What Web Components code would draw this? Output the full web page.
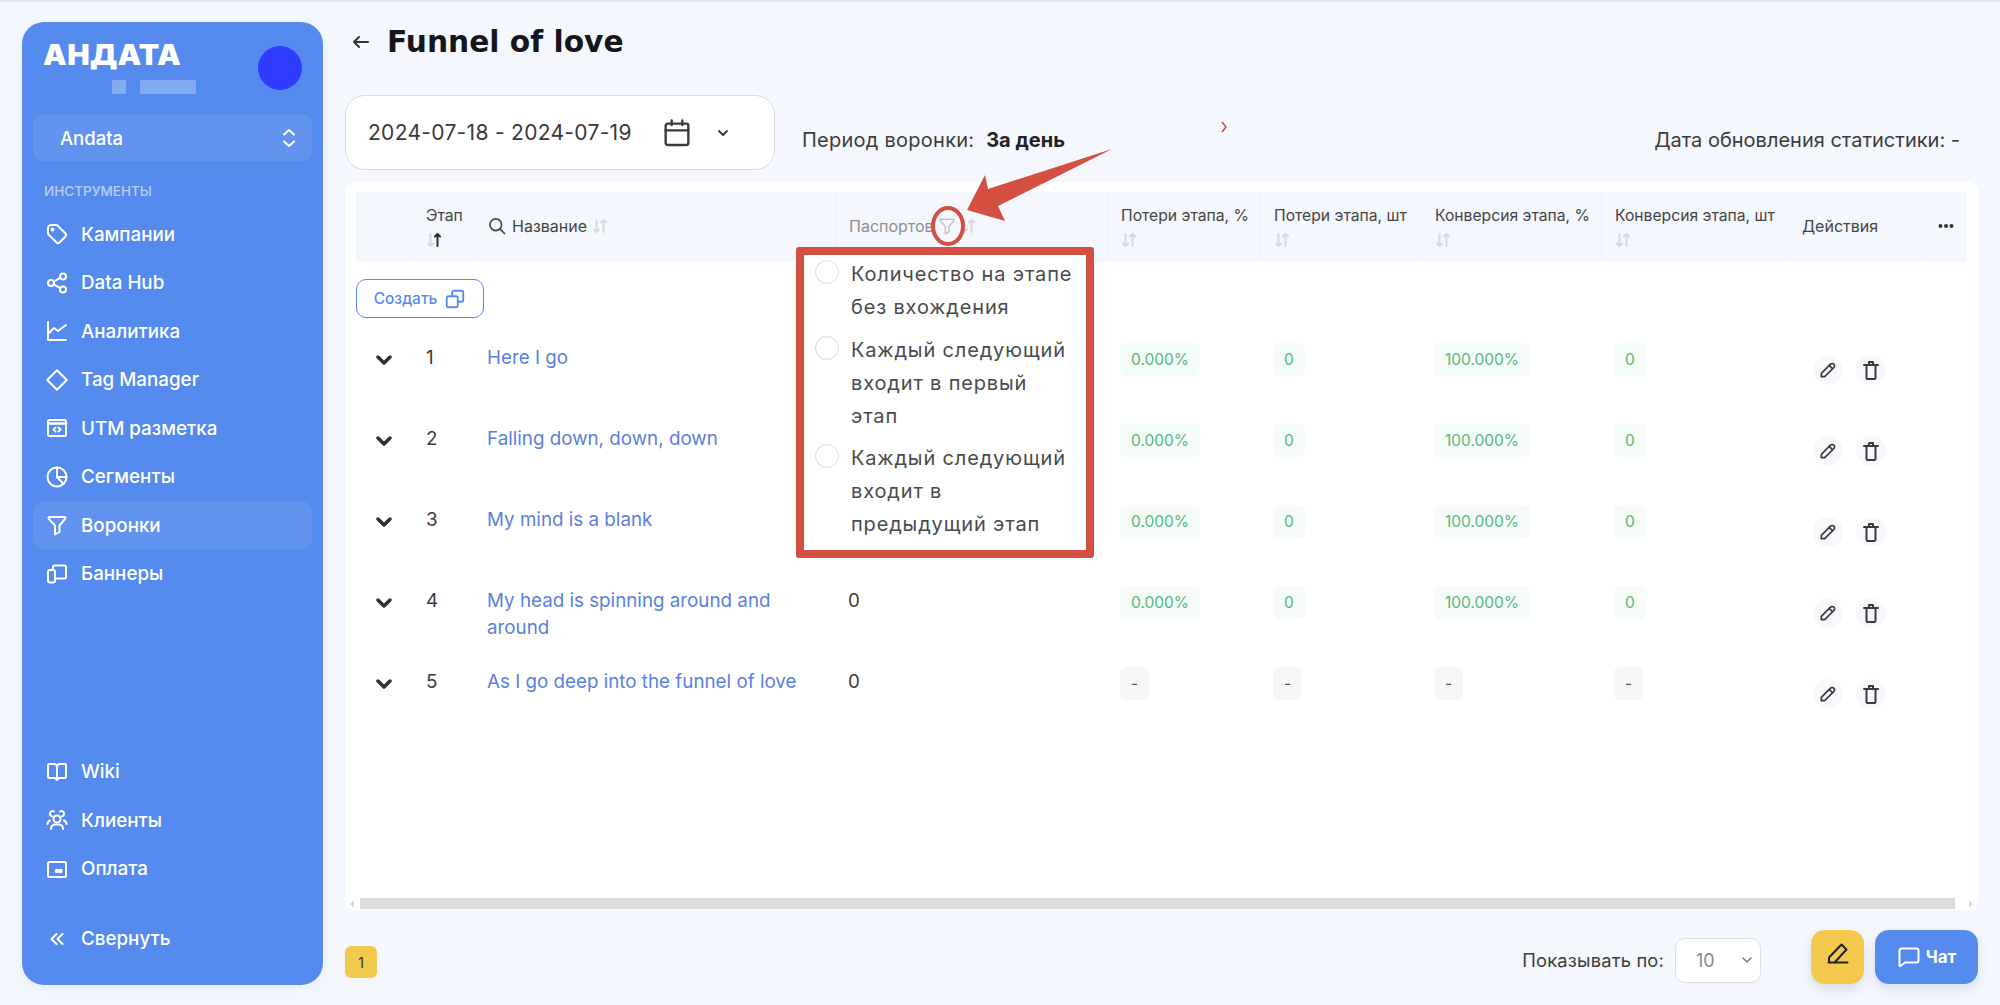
<!DOCTYPE html>
<html lang="ru">
<head>
<meta charset="utf-8">
<title>Funnel of love</title>
<style>
  html, body { margin: 0; height: 100%; }
  body { background: #f4f7fd; border-top: 2px solid #e3e6ec; box-sizing: border-box; font-family: Inter, "Noto Sans", sans-serif; overflow: hidden; }
  #app { display: flex; height: 1003px; }
</style>
</head>
<body>
<div id="app">
  <app-sidebar>
    <nav-item icon="tag">Кампании</nav-item>
    <nav-item icon="share">Data Hub</nav-item>
    <nav-item icon="chart">Аналитика</nav-item>
    <nav-item icon="diamond">Tag Manager</nav-item>
    <nav-item icon="code">UTM разметка</nav-item>
    <nav-item icon="pie">Сегменты</nav-item>
    <nav-item icon="funnel" active>Воронки</nav-item>
    <nav-item icon="banner">Баннеры</nav-item>
    <nav-item slot="bottom" icon="book">Wiki</nav-item>
    <nav-item slot="bottom" icon="users">Клиенты</nav-item>
    <nav-item slot="bottom" icon="pay">Оплата</nav-item>
    <nav-item slot="collapse" icon="collapse">Свернуть</nav-item>
  </app-sidebar>
  <funnel-page>
    <funnel-row stage="1" name="Here I go" loss="0.000%" lossn="0" conv="100.000%" convn="0"></funnel-row>
    <funnel-row stage="2" name="Falling down, down, down" loss="0.000%" lossn="0" conv="100.000%" convn="0"></funnel-row>
    <funnel-row stage="3" name="My mind is a blank" loss="0.000%" lossn="0" conv="100.000%" convn="0"></funnel-row>
    <funnel-row stage="4" name="My head is spinning around and around" pass="0" loss="0.000%" lossn="0" conv="100.000%" convn="0"></funnel-row>
    <funnel-row stage="5" name="As I go deep into the funnel of love" pass="0" loss="-" lossn="-" conv="-" convn="-"></funnel-row>
  </funnel-page>
</div>
<funnel-callout></funnel-callout>

<script>
const ICONS = {
  tag: '<circle cx="7.5" cy="7.5" r="1"/><path d="M3 6v5.172a2 2 0 0 0 .586 1.414l7.71 7.71a2.41 2.41 0 0 0 3.408 0l5.592-5.592a2.41 2.41 0 0 0 0-3.408l-7.71-7.71a2 2 0 0 0-1.414-.586H6a3 3 0 0 0-3 3"/>',
  share: '<circle cx="6" cy="12" r="3"/><circle cx="18" cy="5.5" r="3"/><circle cx="18" cy="18.5" r="3"/><path d="M8.7 10.6l6.6-3.7M8.7 13.4l6.6 3.7"/>',
  chart: '<path d="M3 3v18h18"/><path d="M4 14l5-5 4 3 8-6"/>',
  diamond: '<path d="M12 2.2L21.8 12 12 21.8 2.2 12z"/>',
  code: '<rect x="3" y="4" width="18" height="16" rx="1.5"/><path d="M3 7.5h18" stroke-width="2.5"/><path d="M10.5 11.5l-2 2 2 2M13.5 11.5l2 2-2 2"/>',
  pie: '<circle cx="12" cy="12" r="9.500"/><path d="M12 2.500V12h9.500"/><path d="M12 12l6.500 7"/>',
  funnel: '<path d="M4.5 4h15a1 1 0 0 1 .8 1.6L14.5 12.500V19l-4.500 2.500v-9L3.700 5.600A1 1 0 0 1 4.500 4z"/>',
  banner: '<path d="M8 8V5a1.500 1.500 0 0 1 1.500-1.500H19.500A1.500 1.500 0 0 1 21 5v10a1.500 1.500 0 0 1-1.500 1.500H10"/><rect x="3" y="8" width="7" height="12.500" rx="2"/>',
  book: '<path d="M12 7a3 3 0 0 0-3-3H4a1 1 0 0 0-1 1v12a1 1 0 0 0 1 1h6l2 2 2-2h6a1 1 0 0 0 1-1V5a1 1 0 0 0-1-1h-5a3 3 0 0 0-3 3v11"/>',
  users: '<circle cx="12" cy="11" r="3.500"/><path d="M6 21v-.5a4 4 0 0 1 4-4h4a4 4 0 0 1 4 4v.500"/><path d="M7.500 8.500a2.700 2.700 0 1 1 1.500-5"/><path d="M16.500 8.500a2.700 2.700 0 1 0-1.500-5"/><path d="M2.500 16a4 4 0 0 1 2.500-3.500M21.500 16a4 4 0 0 0-2.500-3.500"/>',
  pay: '<rect x="3" y="5" width="18" height="15" rx="1.500"/><circle cx="12" cy="14" r="1.200" fill="currentColor"/><circle cx="15.500" cy="14" r="1.200" fill="currentColor"/>',
  collapse: '<path d="M11.500 7l-5 5 5 5M17.500 7l-5 5 5 5"/>'
};

function svgIcon(body, size, width) {
  return `<svg width="${size}" height="${size}" viewBox="0 0 24 24" fill="none" stroke="currentColor" stroke-width="${width}" stroke-linecap="round" stroke-linejoin="round">${body}</svg>`;
}

function sortIcon(active) {
  return `<svg width="16" height="18" viewBox="0 0 16 18" fill="none" stroke-width="2" stroke-linecap="round" stroke-linejoin="round">
    <path d="M4.500 3v12M2 12.500L4.500 15 7 12.500" stroke="#d6d8dd"/>
    <path d="M11.500 15V3M9 5.500L11.500 3 14 5.500" stroke="${active ? '#2b2b2b' : '#d6d8dd'}"/>
  </svg>`;
}

class AppSidebar extends HTMLElement {
  constructor() {
    super();
    this.attachShadow({ mode: 'open' }).innerHTML = `
      <style>
        :host { display: flex; flex-direction: column; width: 301px; height: 963px; margin: 20px 22px 0 22px; padding: 0 11px; box-sizing: border-box; background: #558bee; border-radius: 22px; color: #fff; flex: none; box-shadow: 0 4px 14px rgba(85,139,238,.08); }
        .brand { height: 92px; position: relative; display: flex; justify-content: space-between; }
        .logo-wrap { padding: 17px 0 0 10px; }
        .logo { font: 900 28px/32px Inter, sans-serif; letter-spacing: .3px; transform: scaleX(1.07); transform-origin: left; }
        .blur { display: flex; gap: 14px; margin: 9px 0 0 69px; }
        .blur i { display: block; height: 14px; background: rgba(255,255,255,.28); }
        .blur i:first-child { width: 14px; }
        .blur i:last-child { width: 56px; }
        .avatar { width: 44px; height: 44px; border-radius: 50%; background: #2e3cff; margin: 24px 10px 0 0; }
        .select { height: 47px; border-radius: 10px; background: rgba(255,255,255,.08); display: flex; align-items: center; justify-content: space-between; padding: 0 15px 0 27px; font-size: 18.500px; font-weight: 500; }
        .select svg { display: block; }
        .label { height: 49px; line-height: 60px; padding-left: 11px; box-sizing: border-box; font-size: 13.500px; font-weight: 500; color: rgba(255,255,255,.6); }
        .bottom { margin-top: auto; }
        .collapse { margin: 21.500px 0 22px; }
      </style>
      <div class="brand">
        <div class="logo-wrap">
          <div class="logo">АНДАТА</div>
          <div class="blur"><i></i><i></i></div>
        </div>
        <div class="avatar"></div>
      </div>
      <div class="select">
        <span>Andata</span>
        <svg width="16" height="24" viewBox="0 0 16 24" fill="none" stroke="currentColor" stroke-width="2" stroke-linecap="round" stroke-linejoin="round"><path d="M3 8.500L8 4l5 4.500M3 15.500L8 20l5-4.500"/></svg>
      </div>
      <div class="label">ИНСТРУМЕНТЫ</div>
      <slot></slot>
      <div class="bottom"><slot name="bottom"></slot></div>
      <div class="collapse"><slot name="collapse"></slot></div>
    `;
  }
}
customElements.define('app-sidebar', AppSidebar);

class NavItem extends HTMLElement {
  connectedCallback() {
    if (this.shadowRoot) return;
    const icon = ICONS[this.getAttribute('icon')];
    this.attachShadow({ mode: 'open' }).innerHTML = `
      <style>
        :host { display: flex; align-items: center; gap: 12px; height: 48.500px; padding-left: 12px; box-sizing: border-box; border-radius: 12px; font-size: 18.800px; font-weight: 500; color: #fff; }
        :host([active]) { background: rgba(255,255,255,.08); }
        svg { display: block; flex: none; }
      </style>
      ${svgIcon(icon, 24, 2)}
      <slot></slot>
    `;
  }
}
customElements.define('nav-item', NavItem);

class FunnelPage extends HTMLElement {
  constructor() {
    super();
    this.attachShadow({ mode: 'open' }).innerHTML = `
      <style>
        :host { display: flex; flex-direction: column; width: 1633px; height: 1003px; flex: none; color: #333; }
        .title { height: 80px; display: flex; align-items: center; gap: 17px; padding-left: 7px; box-sizing: border-box; }
        .title h1 { margin: 0; font: 700 29.700px/40px "DejaVu Sans", Inter, sans-serif; color: #14161c; }
        .toolbar { height: 75px; margin-top: 13px; display: flex; position: relative; }
        .date { width: 430px; height: 75px; box-sizing: border-box; background: #fff; border: 1px solid #d9dbe0; border-radius: 20px; display: flex; align-items: center; padding-left: 22px; font-size: 21px; letter-spacing: .3px; color: #3a3a3a; }
        .date .cal { margin-left: 29px; display: block; }
        .date .dd { margin-left: 24px; display: block; }
        .period { margin-left: 27px; padding-top: 33px; font-size: 20px; line-height: 24px; color: #3c3c3c; letter-spacing: .25px; }
        .period b { margin-left: 6px; font-weight: 700; color: #222; letter-spacing: 0; }
        .updated { margin-left: auto; padding: 33px 18px 0 0; font-size: 20px; line-height: 24px; color: #3c3c3c; }
        .card { height: 728px; margin-top: 12px; background: #fff; border-radius: 10px; display: flex; flex-direction: column; position: relative; }
        .footer { height: 54px; margin-top: 20px; display: flex; align-items: center; }
        .page-no { width: 32px; height: 32px; margin-top: 10px; background: #f2c94c; border-radius: 6px; display: flex; align-items: center; justify-content: center; font-size: 14px; color: #333; }
        .show { margin-left: auto; font-size: 18.300px; color: #3c3c3c; letter-spacing: .2px; margin-top: 6px; }
        .size { width: 86px; height: 45px; margin: 6px 50px 0 11px; box-sizing: border-box; background: #fff; border: 1px solid #dcdee3; border-radius: 10px; display: flex; align-items: center; justify-content: space-between; padding: 0 7px 0 20px; color: #888; font-size: 18px; }
        .pen, .chat { height: 54px; border-radius: 14px; box-shadow: 0 6px 12px rgba(60,80,120,.14); display: flex; align-items: center; justify-content: center; }
        .pen { width: 53px; background: #f2c94c; color: #222; padding-bottom: 8px; box-sizing: border-box; }
        .chat { width: 103px; margin-left: 11px; background: #558bee; color: #fff; gap: 5px; font-size: 17px; font-weight: 700; }
        svg { display: block; }
      </style>
      <div class="title">
        <svg width="18" height="18" viewBox="0 0 18 18" fill="none" stroke="#333" stroke-width="2" stroke-linecap="round" stroke-linejoin="round"><path d="M16 9H2M7 4L2 9l5 5"/></svg>
        <h1>Funnel of love</h1>
      </div>
      <div class="toolbar">
        <div class="date">
          <span>2024-07-18 - 2024-07-19</span>
          <span class="cal">${svgIcon('<rect x="3.500" y="5" width="17" height="16" rx="1.500"/><path d="M3.500 10h17M8 2.500V6M16 2.500V6"/>', 32, 1.800)}</span>
          <span class="dd"><svg width="12" height="8" viewBox="0 0 12 8" fill="none" stroke="#333" stroke-width="1.800" stroke-linecap="round" stroke-linejoin="round"><path d="M2 2l4 4 4-4"/></svg></span>
        </div>
        <div class="period">Период воронки: <b>За день</b></div>
        <div class="updated">Дата обновления статистики: -</div>
      </div>
      <div class="card">
        <funnel-table><slot></slot></funnel-table>
        <table-scrollbar></table-scrollbar>
      </div>
      <div class="footer">
        <div class="page-no">1</div>
        <div class="show">Показывать по:</div>
        <div class="size"><span>10</span><svg width="12" height="8" viewBox="0 0 12 8" fill="none" stroke="#777" stroke-width="1.500" stroke-linecap="round" stroke-linejoin="round"><path d="M2 2l4 4 4-4"/></svg></div>
        <div class="pen">${svgIcon('<path d="M2.500 21.500h19"/><path d="M3 21v-4.500L15.500 3.500l5 5L9 21"/>', 24, 2)}</div>
        <div class="chat">${svgIcon('<path d="M2.500 5.500a2 2 0 0 1 2-2h15a2 2 0 0 1 2 2v10a2 2 0 0 1-2 2H8l-4.500 3.500a.6.6 0 0 1-1-.5z"/>', 24, 2)}<span>Чат</span></div>
      </div>
    `;
  }
}
customElements.define('funnel-page', FunnelPage);

class TableScrollbar extends HTMLElement {
  constructor() {
    super();
    this.attachShadow({ mode: 'open' }).innerHTML = `
      <style>
        :host { display: flex; align-items: center; height: 11px; margin-bottom: 1px; padding: 0 5px; color: #ddd; font-size: 0; }
        .bar { height: 11px; flex: 1; margin: 0 14px 0 6px; background: #dcdcdc; }
        i { width: 0; height: 0; border: 4px solid transparent; }
        .l { border-right-color: #d8d8d8; border-left-width: 0; }
        .r { border-left-color: #d8d8d8; border-right-width: 0; }
      </style>
      <i class="l"></i><div class="bar"></div><i class="r"></i>
    `;
  }
}
customElements.define('table-scrollbar', TableScrollbar);

const COLUMNS = '57px 64px 358px 272px 153px 161px 180px 188px 133px 45px';

class FunnelTable extends HTMLElement {
  constructor() {
    super();
    const sort = sortIcon(false);
    this.attachShadow({ mode: 'open' }).innerHTML = `
      <style>
        :host { display: block; flex: 1; padding: 10px 11px 0; --cols: ${COLUMNS}; }
        .head { display: grid; grid-template-columns: var(--cols); height: 70px; background: #f4f7fd; font-size: 15.700px; color: #444; }
        .th { box-sizing: border-box; padding: 0 0 0 13px; border-left: 1px solid #eef1f8; display: flex; flex-direction: column; justify-content: center; gap: 5px; line-height: 20px; white-space: nowrap; }
        .th:first-child { border-left: 0; }
        .inline { flex-direction: row; align-items: center; justify-content: flex-start; gap: 5px; font-size: 16px; padding-bottom: 2px; }
        .muted { color: #8e8e8e; gap: 3px; }
        .create { height: 78px; display: flex; align-items: flex-start; padding-top: 17px; box-sizing: border-box; }
        .create div { width: 128px; height: 39px; box-sizing: border-box; border: 1px solid #558bee; border-radius: 10px; color: #558bee; font-size: 15.500px; font-weight: 500; display: flex; align-items: center; justify-content: center; gap: 7px; }
        svg { display: block; flex: none; }
      </style>
      <div class="head">
        <div class="th"></div>
        <div class="th" style="padding-left:12px">Этап ${sortIcon(true)}</div>
        <div class="th inline" style="padding-left:9px">${svgIcon('<circle cx="10.500" cy="10.500" r="7"/><path d="M21 21l-5.500-5.500"/>', 20, 2)}<span>Название</span>${sort}</div>
        <div class="th inline muted"><span>Паспортов</span><span style="display:flex;color:#bbb">${svgIcon(ICONS.funnel, 20, 1.500)}</span>${sort}</div>
        <div class="th">Потери этапа, % ${sort}</div>
        <div class="th">Потери этапа, шт ${sort}</div>
        <div class="th">Конверсия этапа, % ${sort}</div>
        <div class="th">Конверсия этапа, шт ${sort}</div>
        <div class="th inline" style="padding-left:12px">Действия</div>
        <div class="th" style="padding-left:15px;padding-bottom:2px"><svg width="16" height="4" viewBox="0 0 16 4" fill="#333"><circle cx="2.500" cy="2" r="2"/><circle cx="8" cy="2" r="2"/><circle cx="13.500" cy="2" r="2"/></svg></div>
      </div>
      <div class="create"><div>Создать ${svgIcon('<rect x="3" y="9" width="12" height="12" rx="2"/><path d="M9 9V5a2 2 0 0 1 2-2h8a2 2 0 0 1 2 2v8a2 2 0 0 1-2 2h-4"/>', 22, 2)}</div></div>
      <slot></slot>
    `;
  }
}
customElements.define('funnel-table', FunnelTable);

class FunnelRow extends HTMLElement {
  connectedCallback() {
    if (this.shadowRoot) return;
    const a = name => this.getAttribute(name) || '';
    const badge = v => `<span class="badge ${v === '-' ? 'none' : ''}">${v}</span>`;
    this.attachShadow({ mode: 'open' }).innerHTML = `
      <style>
        :host { display: grid; grid-template-columns: ${COLUMNS}; height: 81px; font-size: 18.800px; line-height: 27px; color: #3a3a3a; }
        .c { padding: 3.500px 0 0 13px; box-sizing: border-box; }
        .exp { padding: 14px 0 0 20px; }
        .name { padding: 3.500px 20px 0 10px; color: #5b80dd; }
        .m { padding-top: 3px; }
        .badge { display: inline-block; height: 33px; line-height: 34px; padding: 0 11px; border-radius: 6px; background: #f5fbf6; color: #56b97b; font-size: 15.500px; }
        .badge.none { background: #f6f6f7; color: #555; padding: 0 11px; }
        .act { padding: 15px 0 0 24px; display: flex; gap: 13px; }
        .act span { width: 30px; height: 30px; border-radius: 50%; background: #f7f8fb; display: flex; align-items: center; justify-content: center; }
        svg { display: block; }
      </style>
      <div class="c exp"><svg width="16" height="12" viewBox="0 0 16 12" fill="none" stroke="#2f2f2f" stroke-width="3.500" stroke-linecap="round" stroke-linejoin="round"><path d="M2 3l6 6 6-6"/></svg></div>
      <div class="c">${a('stage')}</div>
      <div class="c name">${a('name')}</div>
      <div class="c">${a('pass')}</div>
      <div class="c m">${badge(a('loss'))}</div>
      <div class="c m">${badge(a('lossn'))}</div>
      <div class="c m">${badge(a('conv'))}</div>
      <div class="c m">${badge(a('convn'))}</div>
      <div class="c act">
        <span>${svgIcon('<path d="M4 20v-4L15 5a2.800 2.800 0 0 1 4 4L8 20z"/><path d="M13.500 6.500l4 4"/>', 20, 2)}</span>
        <span>${svgIcon('<path d="M5 7h14M7.500 7v13a1 1 0 0 0 1 1h7a1 1 0 0 0 1-1V7M10 7V4h4v3"/>', 24, 2)}</span>
      </div>
      <div class="c"></div>
    `;
  }
}
customElements.define('funnel-row', FunnelRow);

// red annotation drawn over the screenshot: arrow, circle round the filter, boxed popup
class FunnelCallout extends HTMLElement {
  constructor() {
    super();
    this.attachShadow({ mode: 'open' }).innerHTML = `
      <style>
        :host { position: absolute; left: 0; top: 0; width: 2000px; height: 1005px; pointer-events: none; }
        svg.mark { position: absolute; left: 0; top: 0; }
        .box { position: absolute; left: 796px; top: 247px; width: 298px; height: 311px; box-sizing: border-box; border: 8px solid #d34f42; border-radius: 3px; background: #fff; padding: 3px 10px 0 11px; font-size: 20px; line-height: 33px; color: #4a4a4a; letter-spacing: .85px; }
        .opt { display: flex; gap: 12px; margin-bottom: 9.500px; }
        .opt i { flex: none; width: 24px; height: 24px; margin-top: 2px; box-sizing: border-box; border: 1px solid #d9d9d9; border-radius: 50%; background: #fff; }
      </style>
      <svg class="mark" width="2000" height="1005" fill="none">
        <ellipse cx="948" cy="226" rx="15" ry="18" stroke="#d34f42" stroke-width="4"/>
        <path d="M967 210L985 175L988 189L1112 149L998 206L1005 221Z" fill="#d34f42"/>
        <path d="M1222 122l4 5-4 5" stroke="#d34f42" stroke-width="1.500"/>
      </svg>
      <div class="box">
        <div class="opt"><i></i><span>Количество на этапе без вхождения</span></div>
        <div class="opt"><i></i><span>Каждый следующий входит в первый этап</span></div>
        <div class="opt"><i></i><span>Каждый следующий входит в предыдущий этап</span></div>
      </div>
    `;
  }
}
customElements.define('funnel-callout', FunnelCallout);
</script>
</body>
</html>
